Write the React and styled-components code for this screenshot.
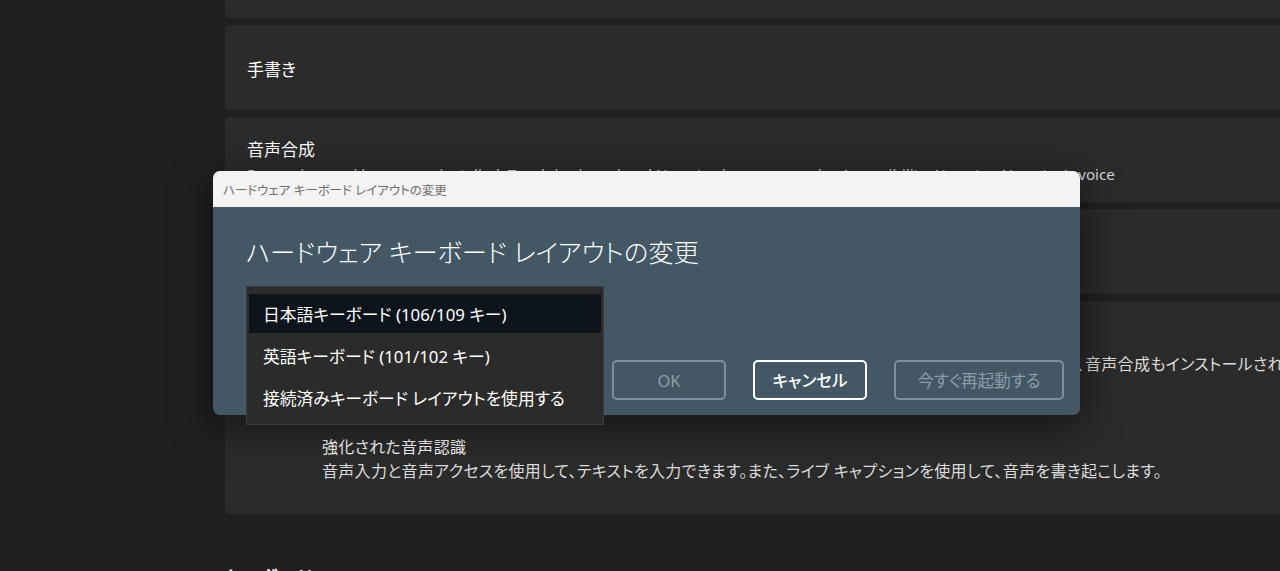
import styled, { createGlobalStyle } from "styled-components";

const Global = createGlobalStyle`
  html, body {
    margin: 0;
    padding: 0;
    background: #202020;
    overflow: hidden;
  }
  body {
    font-family: "Noto Sans", "Noto Sans CJK JP", sans-serif;
    font-feature-settings: "palt";
    color: #ffffff;
  }
`;

const Page = styled.div`
  position: relative;
  width: 1280px;
  height: 571px;
  overflow: hidden;
`;

const List = styled.div`
  display: flex;
  flex-direction: column;
  gap: 7px;
  margin-top: -59px;
  padding-left: 225px;
`;

const Card = styled.div`
  width: 1100px;
  height: ${(p) => p.$h}px;
  box-sizing: border-box;
  background: #2b2b2b;
  border-radius: 5px;
  display: flex;
  flex-direction: column;
  justify-content: ${(p) => (p.$top ? "flex-start" : "center")};
  padding: ${(p) => (p.$top ? "28px 0 0 97px" : "4px 0 0 22px")};
`;

const CardTitle = styled.div`
  font-size: 17px;
  line-height: 22px;
  color: #ffffff;
  white-space: nowrap;
`;

const CardSub = styled.div`
  font-size: 15.2px;
  line-height: 20px;
  color: #d6d6d6;
  white-space: nowrap;
  margin-top: 3px;
`;

const Option = styled.div`
  display: flex;
  flex-direction: column;
  gap: 2px;
  margin-bottom: 61px;
`;

const OptionTitle = styled.div`
  font-size: 16px;
  letter-spacing: 0.3px;
  line-height: 22px;
  color: #f2f2f2;
  white-space: nowrap;
`;

const OptionDesc = styled.div`
  font-size: 16px;
  letter-spacing: 0.3px;
  line-height: 22px;
  color: #dcdcdc;
  white-space: nowrap;
`;

const SectionHeading = styled.div`
  margin-top: 43px;
  margin-left: -2px;
  font-size: 19px;
  font-weight: 700;
  line-height: 28px;
  color: #ffffff;
`;

const Dialog = styled.div`
  position: absolute;
  left: 213px;
  top: 171px;
  width: 867px;
  height: 244px;
  border-radius: 7px;
  background: #435864;
  box-shadow: 0 10px 40px rgba(0, 0, 0, 0.55);
  display: flex;
  flex-direction: column;
`;

const TitleBar = styled.div`
  height: 36px;
  flex: none;
  background: #f3f3f3;
  border-radius: 7px 7px 0 0;
  display: flex;
  align-items: center;
  padding-left: 10px;
  font-size: 12.5px;
  color: #6e6e6e;
`;

const Body = styled.div`
  position: relative;
  flex: 1;
  display: flex;
  flex-direction: column;
  justify-content: space-between;
  padding: 27px 16px 15px 33px;
`;

const Heading = styled.h1`
  margin: 0;
  font-size: 25.3px;
  font-weight: 300;
  line-height: 36px;
  color: #ffffff;
  white-space: nowrap;
`;

const Buttons = styled.div`
  display: flex;
  justify-content: flex-end;
  gap: 27px;
`;

const Button = styled.button`
  width: ${(p) => p.$w}px;
  height: 40px;
  box-sizing: border-box;
  border-radius: 5px;
  border: 2px solid ${(p) => (p.$active ? "#ffffff" : "#7d909b")};
  background: transparent;
  color: ${(p) => (p.$active ? "#ffffff" : "#8c9ea8")};
  font-family: inherit;
  font-feature-settings: "palt";
  font-size: 16.5px;
  font-weight: ${(p) => (p.$active ? 500 : 400)};
  padding: 0;
`;

const Dropdown = styled.ul`
  position: absolute;
  left: 33px;
  top: 79px;
  width: 358px;
  margin: 0;
  padding: 7px 2px 7px 2px;
  box-sizing: border-box;
  list-style: none;
  background: #2b2b2b;
  border: 1px solid #3c3c3c;
  display: flex;
  flex-direction: column;
  gap: 3px;
  z-index: 2;
`;

const Item = styled.li`
  height: 39px;
  display: flex;
  align-items: center;
  padding-left: 14px;
  font-size: 16.8px;
  color: #ffffff;
  background: ${(p) => (p.$selected ? "#0e141b" : "transparent")};
  white-space: nowrap;
`;

const layouts = [
  "日本語キーボード (106/109 キー)",
  "英語キーボード (101/102 キー)",
  "接続済みキーボード レイアウトを使用する",
];

export default function App() {
  return (
    <Page>
      <Global />
      <List>
        <Card $h={77} />
        <Card $h={85}>
          <CardTitle>手書き</CardTitle>
        </Card>
        <Card $h={85}>
          <CardTitle>音声合成</CardTitle>
          <CardSub>
            Recognizer and languages installed. Touch keyboard and Narrator language packs, Accessibility, Narrator, Narrator's voice
          </CardSub>
        </Card>
        <Card $h={85} />
        <Card $h={213} $top>
          <Option>
            <OptionTitle>音声認識</OptionTitle>
            <OptionDesc>
              音声アクセスとライブ キャプションで使用する音声認識パックをダウンロードします。これをインストールすると、音声合成もインストールされます。
            </OptionDesc>
          </Option>
          <Option>
            <OptionTitle>強化された音声認識</OptionTitle>
            <OptionDesc>
              音声入力と音声アクセスを使用して、テキストを入力できます。また、ライブ キャプションを使用して、音声を書き起こします。
            </OptionDesc>
          </Option>
        </Card>
        <SectionHeading>キーボード</SectionHeading>
      </List>

      <Dialog>
        <TitleBar>ハードウェア キーボード レイアウトの変更</TitleBar>
        <Body>
          <Heading>ハードウェア キーボード レイアウトの変更</Heading>
          <Buttons>
            <Button $w={114}>OK</Button>
            <Button $w={114} $active>キャンセル</Button>
            <Button $w={170}>今すぐ再起動する</Button>
          </Buttons>
          <Dropdown>
            {layouts.map((l, i) => (
              <Item key={l} $selected={i === 0}>{l}</Item>
            ))}
          </Dropdown>
        </Body>
      </Dialog>
    </Page>
  );
}
